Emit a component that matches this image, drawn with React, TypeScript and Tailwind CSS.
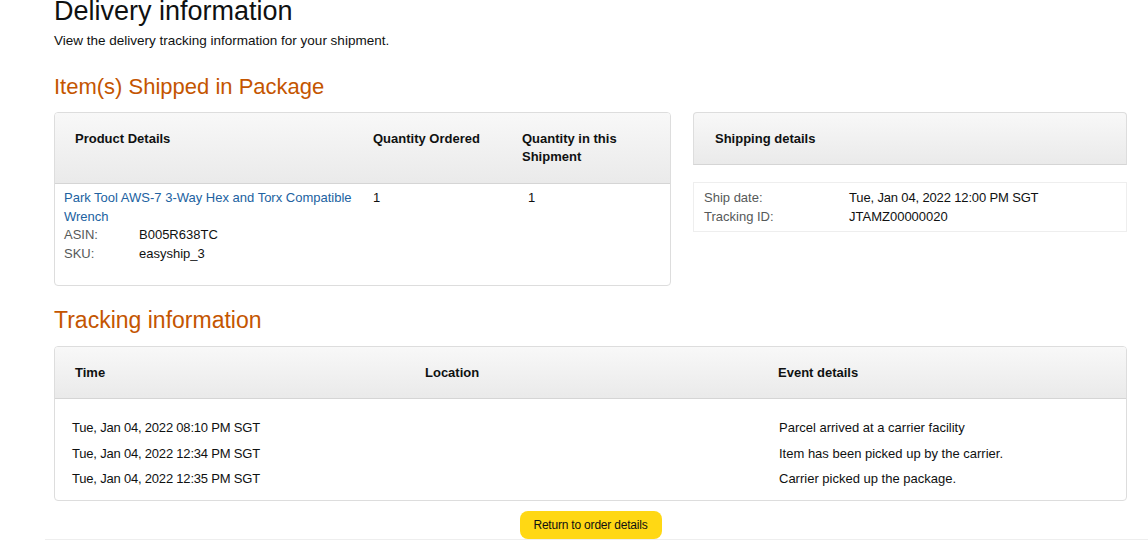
const product = {
  name: "Park Tool AWS-7 3-Way Hex and Torx Compatible Wrench",
  asin: "B005R638TC",
  sku: "easyship_3",
  ordered: 1,
  shipped: 1,
};

const events = [
  { time: "Tue, Jan 04, 2022 08:10 PM SGT", location: "", detail: "Parcel arrived at a carrier facility" },
  { time: "Tue, Jan 04, 2022 12:34 PM SGT", location: "", detail: "Item has been picked up by the carrier." },
  { time: "Tue, Jan 04, 2022 12:35 PM SGT", location: "", detail: "Carrier picked up the package." },
];

const headerBg = "bg-gradient-to-b from-[#f8f8f8] to-[#eaeaea]";

export default function App() {
  return (
    <div className="min-h-[550px] bg-white text-[#0f1111] font-['Liberation_Sans',Arial,sans-serif]">
      <div className="ml-[54px] w-[1073px]">
        <h1 className="text-[27px] leading-[24px] -mt-[1px] font-normal">Delivery information</h1>
        <p className="mt-[9px] text-[13.5px] leading-[18px]">
          View the delivery tracking information for your shipment.
        </p>

        {/* Items */}
        <h2 className="mt-[23px] text-[22px] leading-[28px] text-[#c45500]">Item(s) Shipped in Package</h2>
        <div className="mt-[11px] flex items-start gap-[22px]">
          <div className="w-[617px] h-[174px] rounded-[4px] border border-[#dddddd] overflow-hidden">
            <div className={`flex h-[71px] border-b border-[#d5d5d5] ${headerBg} text-[13px] leading-[18px] font-bold pt-[17px]`}>
              <div className="w-[308px] pl-[20px]">Product Details</div>
              <div className="w-[149px] pl-[10px]">Quantity Ordered</div>
              <div className="w-[120px] pl-[10px]">Quantity in this Shipment</div>
            </div>
            <div className="flex pt-[4px] text-[13px] leading-[19px]">
              <div className="w-[308px] pl-[9px]">
                <a href="#" className="text-[#2162a1]">{product.name}</a>
                <div className="flex -mt-[1px]">
                  <span className="w-[75px] text-[#565959]">ASIN:</span>
                  <span>{product.asin}</span>
                </div>
                <div className="flex">
                  <span className="w-[75px] text-[#565959]">SKU:</span>
                  <span>{product.sku}</span>
                </div>
              </div>
              <div className="w-[149px] pl-[10px]">{product.ordered}</div>
              <div className="pl-[16px]">{product.shipped}</div>
            </div>
          </div>

          <div className="w-[434px]">
            <div className={`h-[53px] rounded-t-[4px] border border-[#dddddd] border-b-[#d5d5d5] ${headerBg} pl-[21px] pt-[17px] text-[13px] leading-[18px] font-bold`}>
              Shipping details
            </div>
            <div className="mt-[17px] h-[50px] border border-[#eeeeee] pl-[10px] pt-[5px] text-[13px] leading-[19px]">
              <div className="flex">
                <span className="w-[145px] text-[#565959]">Ship date:</span>
                <span className="tracking-[-0.15px]">Tue, Jan 04, 2022 12:00 PM SGT</span>
              </div>
              <div className="flex">
                <span className="w-[145px] text-[#565959]">Tracking ID:</span>
                <span>JTAMZ00000020</span>
              </div>
            </div>
          </div>
        </div>

        {/* Tracking */}
        <h2 className="mt-[20px] text-[23px] leading-[28px] text-[#c45500]">Tracking information</h2>
        <div className="mt-[12px] h-[155px] rounded-[4px] border border-[#dddddd] overflow-hidden">
          <div className={`flex h-[52px] items-center border-b border-[#d5d5d5] ${headerBg} text-[13px] font-bold`}>
            <div className="w-[370px] pl-[20px]">Time</div>
            <div className="w-[353px]">Location</div>
            <div>Event details</div>
          </div>
          <div className="pt-[16px] text-[13px] leading-[25.5px]">
            {events.map((e) => (
              <div key={e.time} className="flex">
                <div className="w-[371px] pl-[17px] tracking-[-0.2px]">{e.time}</div>
                <div className="w-[353px]">{e.location}</div>
                <div>{e.detail}</div>
              </div>
            ))}
          </div>
        </div>

        <div className="mt-[10px] flex justify-center">
          <button className="h-[28px] w-[142px] rounded-[8px] bg-[#ffd814] text-[12px] tracking-[-0.2px] text-[#0f1111]">
            Return to order details
          </button>
        </div>
      </div>
      <div className="ml-[45px] border-t border-[#eeeeee]" />
    </div>
  );
}
